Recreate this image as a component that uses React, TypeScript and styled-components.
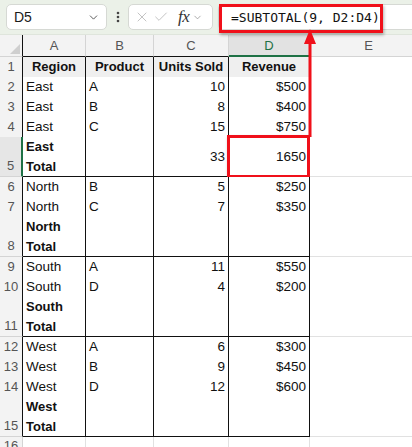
import React from "react";
import styled, { createGlobalStyle } from "styled-components";
import { ChevronDown, X, Check } from "lucide-react";

const GlobalStyle = createGlobalStyle`
  html, body {
    margin: 0;
    padding: 0;
    background: #ffffff;
  }
  body {
    font-family: "Liberation Sans", Arial, sans-serif;
  }
`;

const COLS = "23px 63px 68px 75px 81px 118px";
const RED = "#f0101a";

type Row = {
  n: number;
  cells: [string, string, string, string];
  tall?: boolean;
  total?: boolean;
  header?: boolean;
};

const rows: Row[] = [
  { n: 1, cells: ["Region", "Product", "Units Sold", "Revenue"], header: true },
  { n: 2, cells: ["East", "A", "10", "$500"] },
  { n: 3, cells: ["East", "B", "8", "$400"] },
  { n: 4, cells: ["East", "C", "15", "$750"] },
  { n: 5, cells: ["East\nTotal", "", "33", "1650"], tall: true, total: true },
  { n: 6, cells: ["North", "B", "5", "$250"] },
  { n: 7, cells: ["North", "C", "7", "$350"] },
  { n: 8, cells: ["North\nTotal", "", "", ""], tall: true, total: true },
  { n: 9, cells: ["South", "A", "11", "$550"] },
  { n: 10, cells: ["South", "D", "4", "$200"] },
  { n: 11, cells: ["South\nTotal", "", "", ""], tall: true, total: true },
  { n: 12, cells: ["West", "A", "6", "$300"] },
  { n: 13, cells: ["West", "B", "9", "$450"] },
  { n: 14, cells: ["West", "D", "12", "$600"] },
  { n: 15, cells: ["West\nTotal", "", "", ""], tall: true, total: true },
];

export default function App() {
  return (
    <>
      <GlobalStyle />
      <Page>
        <TopBar>
          <NameBox>
            <NameText>D5</NameText>
            <ChevronDown size={13} strokeWidth={1.6} color="#444" />
          </NameBox>
          <Dots>
            <svg width="4" height="14" viewBox="0 0 4 14">
              <circle cx="2" cy="3" r="1.3" fill="#444" />
              <circle cx="2" cy="7" r="1.3" fill="#444" />
              <circle cx="2" cy="11" r="1.3" fill="#444" />
            </svg>
          </Dots>
          <FxBox>
            <X size={16} strokeWidth={1.2} color="#b4b4b4" />
            <Check size={16} strokeWidth={1.2} color="#b4b4b4" />
            <FxText>fx</FxText>
            <ChevronDown size={11} strokeWidth={1.5} color="#888" />
          </FxBox>
          <FormulaBox>
            <FormulaText>=SUBTOTAL(9, D2:D4)</FormulaText>
            <FormulaHighlight />
          </FormulaBox>
        </TopBar>

        <HeaderRow>
          <Corner>
            <svg width="10" height="10" viewBox="0 0 10 10">
              <polygon points="10,0 10,10 0,10" fill="#cfcfcf" />
            </svg>
          </Corner>
          {["A", "B", "C", "D", "E"].map((c) => (
            <ColHead key={c} $selected={c === "D"} $table={c !== "E"}>
              {c}
            </ColHead>
          ))}
        </HeaderRow>

        {rows.map((r) => (
          <GridRow key={r.n} $tall={r.tall}>
            <RowHead $table $selected={r.n === 5}>
              {r.n}
            </RowHead>
            {r.cells.map((v, i) => (
              <Cell
                key={i}
                $table
                $bold={r.header || (r.total && i === 0)}
                $header={r.header}
                $align={r.header ? "center" : i >= 2 ? "right" : "left"}
              >
                {v}
                {r.n === 5 && i === 3 && <CellHighlight />}
              </Cell>
            ))}
            <Cell />
          </GridRow>
        ))}

        <GridRow>
          <RowHead>16</RowHead>
          <Cell />
          <Cell />
          <Cell />
          <Cell />
          <Cell />
        </GridRow>

        <Arrow width="14" height="108" viewBox="0 0 14 108">
          <polygon points="7,0 13,15 1,15" fill={RED} />
          <rect x="5.5" y="13" width="3" height="95" fill={RED} />
        </Arrow>
      </Page>
    </>
  );
}

const Page = styled.div`
  position: relative;
  width: 412px;
  height: 447px;
  overflow: hidden;
  background: #ffffff;
`;

const TopBar = styled.div`
  height: 35px;
  box-sizing: border-box;
  padding: 4px 0 0 6px;
  display: flex;
  align-items: flex-start;
  background: #ebf1e8;
  border-bottom: 1px solid #dfe5dc;
`;

const NameBox = styled.div`
  width: 101px;
  height: 26px;
  box-sizing: border-box;
  padding: 0 6px 0 7px;
  display: flex;
  align-items: center;
  justify-content: space-between;
  background: #ffffff;
  border: 1px solid #d6d9d4;
  border-radius: 5px;
`;

const NameText = styled.span`
  font-size: 14px;
  color: #1a1a1a;
`;

const Dots = styled.div`
  width: 21px;
  height: 26px;
  display: flex;
  align-items: center;
  justify-content: center;
`;

const FxBox = styled.div`
  width: 85px;
  height: 26px;
  box-sizing: border-box;
  padding: 0 3px 0 5px;
  display: flex;
  align-items: center;
  gap: 3px;
  background: #ffffff;
  border: 1px solid #d6d9d4;
  border-radius: 5px;
`;

const FxText = styled.span`
  margin-left: 6px;
  font-family: "Liberation Serif", "Times New Roman", serif;
  font-style: italic;
  font-size: 17px;
  color: #333;
  letter-spacing: -0.5px;
`;

const FormulaBox = styled.div`
  position: relative;
  flex: 1;
  height: 26px;
  margin-left: 5px;
  box-sizing: border-box;
  padding-left: 12px;
  display: flex;
  align-items: center;
  background: #ffffff;
  border: 1px solid #d6d9d4;
  border-right: none;
  border-radius: 5px 0 0 5px;
`;

const FormulaText = styled.span`
  font-family: "DejaVu Sans Mono", "Liberation Mono", monospace;
  font-size: 13px;
  color: #111;
`;

const FormulaHighlight = styled.div`
  position: absolute;
  left: 0;
  top: -1px;
  width: 164px;
  height: 29px;
  box-sizing: border-box;
  border: 3px solid ${RED};
  box-shadow: 1px 2px 3px rgba(0, 0, 0, 0.3);
`;

const HeaderRow = styled.div`
  display: grid;
  grid-template-columns: ${COLS};
  height: 22px;
  background: #f3f3f3;
`;

const Corner = styled.div`
  display: flex;
  align-items: flex-end;
  justify-content: flex-end;
  padding: 0 2px 2px 0;
  box-sizing: border-box;
  border-right: 1px solid #111;
  border-bottom: 1px solid #d4d4d4;
`;

const ColHead = styled.div<{ $selected?: boolean; $table?: boolean }>`
  display: flex;
  align-items: center;
  justify-content: center;
  box-sizing: border-box;
  font-size: 13px;
  color: ${(p) => (p.$selected ? "#1e7145" : "#555")};
  background: ${(p) => (p.$selected ? "#e2e2e2" : "transparent")};
  border-right: 1px solid #d4d4d4;
  border-bottom: ${(p) =>
    p.$selected ? "2px solid #1e7145" : p.$table ? "1px solid #111" : "1px solid #d4d4d4"};
`;

const GridRow = styled.div<{ $tall?: boolean }>`
  display: grid;
  grid-template-columns: ${COLS};
  height: ${(p) => (p.$tall ? 40 : 20)}px;
`;

const RowHead = styled.div<{ $table?: boolean; $selected?: boolean }>`
  display: flex;
  align-items: flex-end;
  justify-content: center;
  box-sizing: border-box;
  padding-bottom: 1px;
  font-size: 13px;
  line-height: 18px;
  color: #555;
  background: ${(p) => (p.$selected ? "#e6e6e6" : "#f3f3f3")};
  border-bottom: 1px solid #d4d4d4;
  border-right: ${(p) =>
    p.$selected ? "2px solid #1e7145" : p.$table ? "1px solid #111" : "1px solid #d4d4d4"};
`;

const Cell = styled.div<{
  $table?: boolean;
  $bold?: boolean;
  $header?: boolean;
  $align?: "left" | "right" | "center";
}>`
  position: relative;
  display: flex;
  align-items: center;
  justify-content: ${(p) =>
    p.$align === "right" ? "flex-end" : p.$align === "center" ? "center" : "flex-start"};
  box-sizing: border-box;
  padding: 0 3px;
  white-space: pre-line;
  font-size: ${(p) => (p.$bold ? 13 : 13.5)}px;
  font-weight: ${(p) => (p.$bold ? 700 : 400)};
  line-height: 19.5px;
  color: #111;
  background: ${(p) => (p.$header ? "#efefef" : "#ffffff")};
  border-right: 1px solid ${(p) => (p.$table ? "#111" : "#e1e1e1")};
  border-bottom: 1px solid ${(p) => (p.$table ? "#111" : "#e1e1e1")};
`;

const CellHighlight = styled.div`
  position: absolute;
  left: -2px;
  top: -2px;
  right: -1px;
  bottom: -2px;
  border: 3px solid ${RED};
  box-shadow: 1px 2px 3px rgba(0, 0, 0, 0.3);
  pointer-events: none;
`;

const Arrow = styled.svg`
  position: absolute;
  left: 303px;
  top: 29px;
`;
